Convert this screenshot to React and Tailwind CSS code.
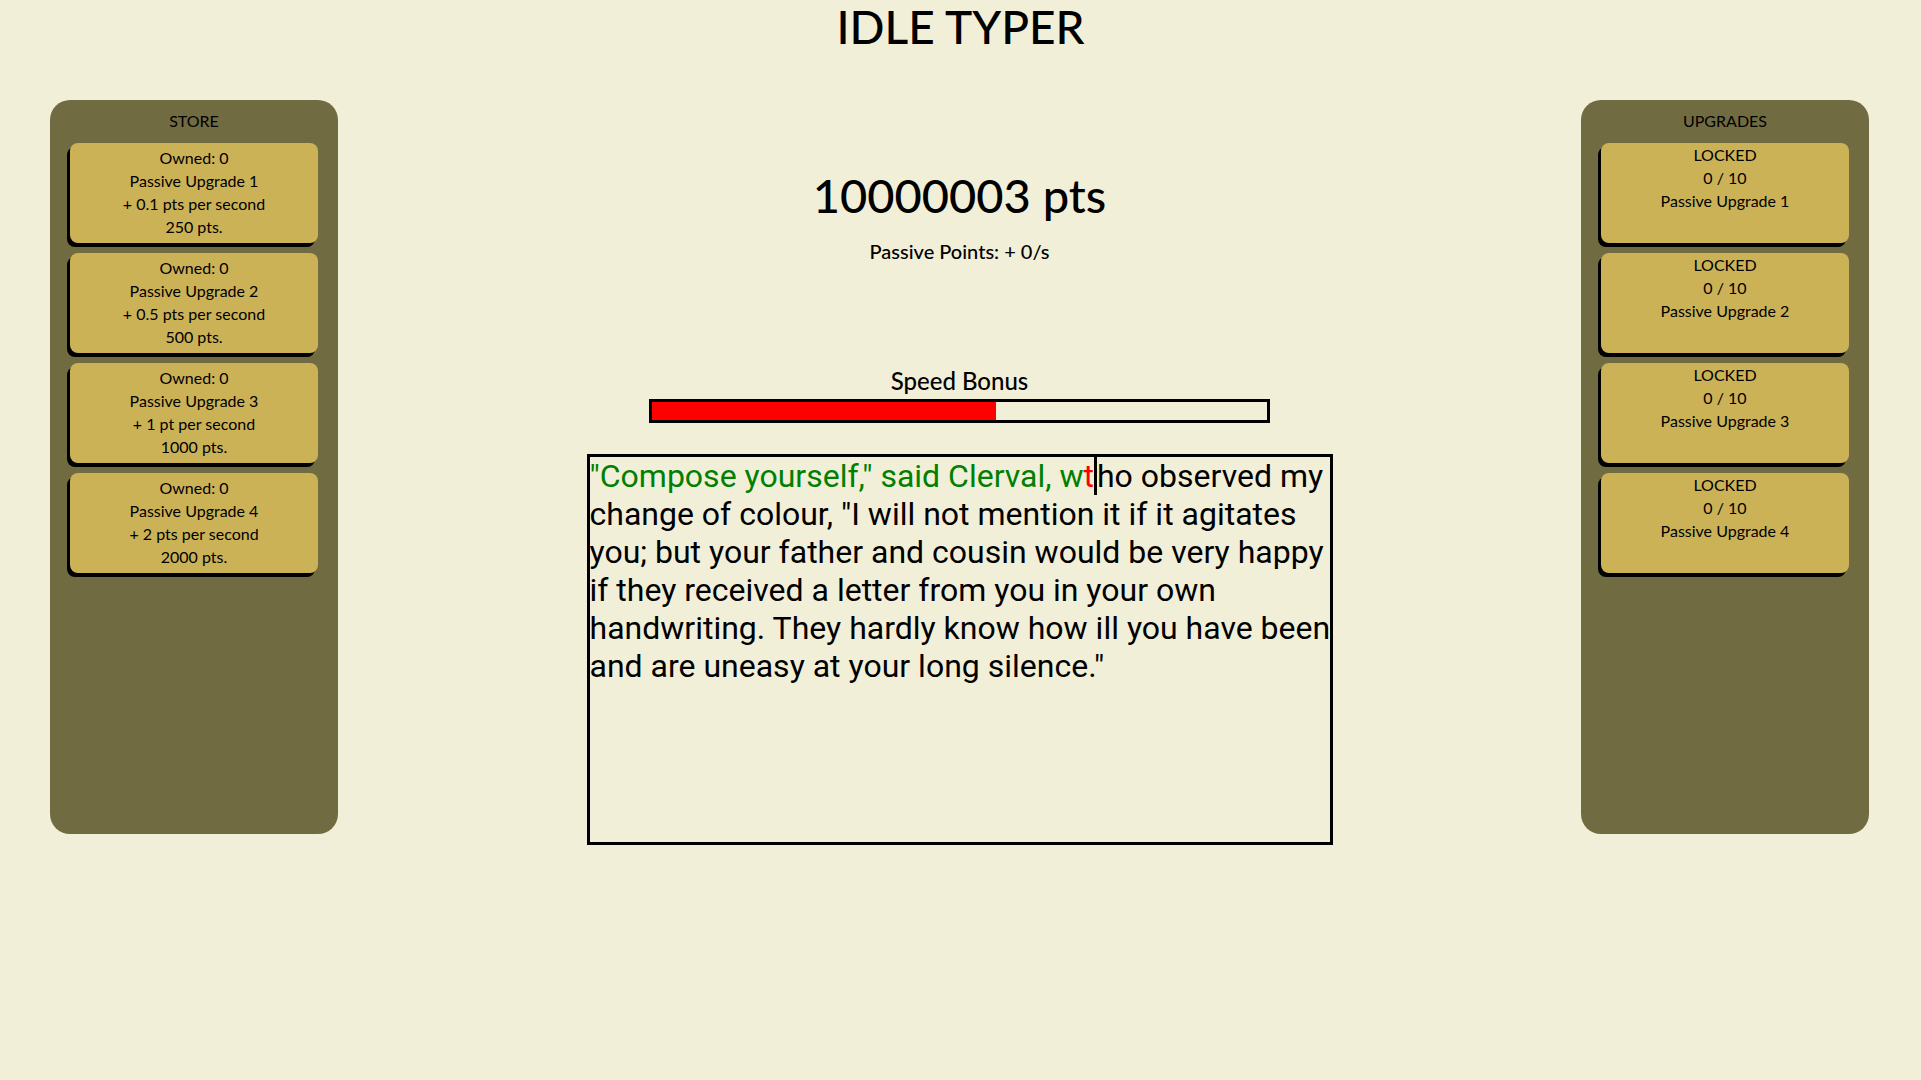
import React from 'react';

const storeItems = [
    { owned: 0, name: 'Passive Upgrade 1', rate: '+ 0.1 pts per second', cost: '250 pts.' },
    { owned: 0, name: 'Passive Upgrade 2', rate: '+ 0.5 pts per second', cost: '500 pts.' },
    { owned: 0, name: 'Passive Upgrade 3', rate: '+ 1 pt per second', cost: '1000 pts.' },
    { owned: 0, name: 'Passive Upgrade 4', rate: '+ 2 pts per second', cost: '2000 pts.' },
];

const upgrades = [
    { level: 0, max: 10, name: 'Passive Upgrade 1' },
    { level: 0, max: 10, name: 'Passive Upgrade 2' },
    { level: 0, max: 10, name: 'Passive Upgrade 3' },
    { level: 0, max: 10, name: 'Passive Upgrade 4' },
];

function Panel({ title, children }) {
    return (
        <div className="w-[288px] h-[734px] bg-[#716b42] rounded-[20px] px-[20px] pt-[9px] flex flex-col">
            <div className="text-center text-[16px] leading-[23px] mb-[11px]">{title}</div>
            {children}
        </div>
    );
}

function Card({ className = '', children }) {
    return (
        <button className={`w-full h-[100px] mb-[10px] bg-[#cbb257] rounded-[8px] shadow-[-3px_4px_0_#000] text-center text-[16px] leading-[23px] flex flex-col items-center ${className}`}>
            {children}
        </button>
    );
}

export default function App() {
    const progressPercent = 56;

    return (
        <div className="min-h-screen bg-[#f2efd9] text-black font-['Lato',sans-serif]">
            <h1 className="text-center text-[46px] leading-[54px] font-medium">IDLE TYPER</h1>

            <div className="flex justify-between pl-[50px] pr-[52px] mt-[46px]">
                <Panel title="STORE">
                    {storeItems.map((item) => (
                        <Card key={item.name} className="pt-[3px]">
                            <span>Owned: {item.owned}</span>
                            <span>{item.name}</span>
                            <span>{item.rate}</span>
                            <span>{item.cost}</span>
                        </Card>
                    ))}
                </Panel>

                <div className="flex flex-col items-center">
                    <div className="mt-[70px] text-[47px] leading-[50px] font-medium">10000003 pts</div>
                    <div className="mt-[19px] text-[20px] leading-[24px] font-medium">Passive Points: + 0/s</div>

                    <div className="mt-[103px] text-[24px] leading-[29px] font-medium">Speed Bonus</div>
                    <div className="mt-[4px] w-[621px] h-[24px] border-[3px] border-black">
                        <div className="h-full bg-[#ff0000]" style={{ width: `${progressPercent}%` }} />
                    </div>

                    <div className="mt-[31px] w-[746px] h-[391px] border-[3px] border-black">
                        <div className="w-[744px] text-left font-['Roboto',sans-serif] text-[32px] leading-[normal]">
                            <span className="text-[#008000]">"Compose yourself," said Clerval, w</span>
                            <span className="text-[#ff0000]">t</span>
                            <span className="border-l-[3px] border-black">h</span>
                            <span>o observed my change of colour, "I will not mention it if it agitates you; but your father and cousin would be very happy if they received a letter from you in your own handwriting. They hardly know how ill you have been and are uneasy at your long silence."</span>
                        </div>
                    </div>
                </div>

                <Panel title="UPGRADES">
                    {upgrades.map((u) => (
                        <Card key={u.name}>
                            <span>LOCKED</span>
                            <span>{u.level} / {u.max}</span>
                            <span>{u.name}</span>
                        </Card>
                    ))}
                </Panel>
            </div>
        </div>
    );
}
